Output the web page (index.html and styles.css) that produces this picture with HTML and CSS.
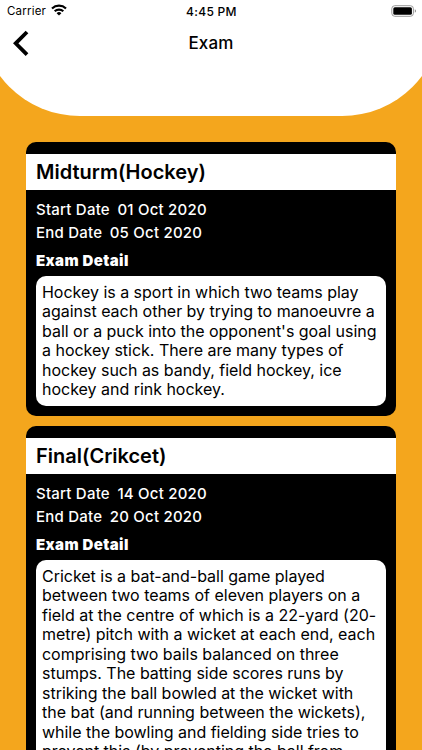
FILE: index.html
```html
<!DOCTYPE html>
<html lang="en">
<head>
    <meta charset="UTF-8">
    <meta name="viewport" content="width=device-width, initial-scale=1.0">
    <title>Exam</title>
    <link rel="stylesheet" href="styles.css">
</head>
<body>
    <header class="header">
        <div class="status-bar">
            <div class="carrier">
                <span class="carrier-name">Carrier</span>
                <svg class="wifi" width="16" height="12" viewBox="0 0 16 12" fill="none" stroke="#000" stroke-width="2.2">
                    <path d="M1 4.5a10.2 10.2 0 0 1 14 0"/>
                    <path d="M3.7 7.3a6.3 6.3 0 0 1 8.6 0"/>
                    <path d="M8 11.6L5.6 9.2a3.5 3.5 0 0 1 4.8 0z" fill="#000" stroke="none"/>
                </svg>
            </div>
            <span class="time">4:45 PM</span>
            <svg class="battery" width="26" height="12" viewBox="0 0 26 12">
                <rect x="0.8" y="0.7" width="21.6" height="10.6" rx="3" fill="none" stroke="#999"/>
                <rect x="2.3" y="2.2" width="18.6" height="7.6" rx="1.6" fill="#000"/>
                <path d="M23.8 4.2q1.2.5 1.2 1.8t-1.2 1.8z" fill="#888"/>
            </svg>
        </div>
        <div class="nav-bar">
            <svg class="back" width="18" height="28" viewBox="0 0 18 28" fill="none" stroke="#000" stroke-width="3.8">
                <path d="M15 3L3.7 14.3L15 25.6"/>
            </svg>
            <h1 class="title">Exam</h1>
        </div>
    </header>

    <main class="exam-list">
        <section class="card">
            <h2 class="card-title">Midturm(Hockey)</h2>
            <div class="dates">
                <div class="date-row"><span>Start Date</span><span>01 Oct 2020</span></div>
                <div class="date-row"><span>End Date</span><span>05 Oct 2020</span></div>
            </div>
            <h3 class="detail-label">Exam Detail</h3>
            <p class="detail">
                Hockey is a sport in which two teams play<br>
                against each other by trying to manoeuvre a<br>
                ball or a puck into the opponent's goal using<br>
                a hockey stick. There are many types of<br>
                hockey such as bandy, field hockey, ice<br>
                hockey and rink hockey.
            </p>
        </section>

        <section class="card">
            <h2 class="card-title">Final(Crikcet)</h2>
            <div class="dates">
                <div class="date-row"><span>Start Date</span><span>14 Oct 2020</span></div>
                <div class="date-row"><span>End Date</span><span>20 Oct 2020</span></div>
            </div>
            <h3 class="detail-label">Exam Detail</h3>
            <p class="detail">
                Cricket is a bat-and-ball game played<br>
                between two teams of eleven players on a<br>
                field at the centre of which is a 22-yard (20-<br>
                metre) pitch with a wicket at each end, each<br>
                comprising two bails balanced on three<br>
                stumps. The batting side scores runs by<br>
                striking the ball bowled at the wicket with<br>
                the bat (and running between the wickets),<br>
                while the bowling and fielding side tries to<br>
                prevent this (by preventing the ball from
            </p>
        </section>
    </main>
</body>
</html>
```

FILE: styles.css
```css
body {
    font-family: Inter, 'Liberation Sans', sans-serif;
    background-color: #f4a61d;
    color: #000;
    margin: 0;
    height: 750px;
    overflow: hidden;
}

h1, h2, h3, p {
    margin: 0;
}

.header {
    height: 116px;
    margin: 0 -20px;
    padding: 0 20px;
    box-sizing: border-box;
    background-color: white;
    border-radius: 0 0 100px 100px;
}

.status-bar {
    display: grid;
    grid-template-columns: 1fr auto 1fr;
    align-items: center;
    height: 22px;
    padding: 0 6px 0 7px;
}

.carrier {
    display: flex;
    align-items: center;
    gap: 5px;
    font-size: 11.5px;
    letter-spacing: 0.2px;
}

.wifi {
    margin-top: -2px;
}

.time {
    font-size: 12px;
    font-weight: 500;
    letter-spacing: 0.3px;
}

.battery {
    justify-self: end;
    margin-right: -1px;
}

.nav-bar {
    display: grid;
    grid-template-columns: 1fr auto 1fr;
    align-items: center;
    height: 42px;
    padding: 0 11px;
}

.back {
    margin-left: 1px;
}

.title {
    font-size: 17px;
    font-weight: 500;
    letter-spacing: 0.15px;
}

.exam-list {
    display: flex;
    flex-direction: column;
    gap: 10px;
    padding: 26px 26px 0;
}

.card {
    padding: 12px 0 10px;
    background-color: black;
    color: white;
    border-radius: 10px;
}

.card-title {
    height: 36px;
    padding: 0 10px;
    background-color: white;
    color: black;
    font-size: 20px;
    font-weight: 600;
    line-height: 37px;
}

.dates {
    padding: 7.5px 10px 0.5px;
    font-size: 15px;
    font-weight: 500;
    letter-spacing: 0.22px;
    line-height: 23.5px;
}

.date-row {
    display: flex;
    gap: 7.5px;
}

.detail-label {
    padding: 6px 10px 0;
    font-size: 15px;
    font-weight: 900;
    letter-spacing: 0.42px;
    line-height: 20px;
}

.detail {
    margin: 5px 10px 0;
    padding: 6.5px 6px;
    background-color: white;
    color: black;
    border-radius: 10px;
    font-size: 16px;
    letter-spacing: -0.02px;
    line-height: 19.5px;
    white-space: nowrap;
}
```
